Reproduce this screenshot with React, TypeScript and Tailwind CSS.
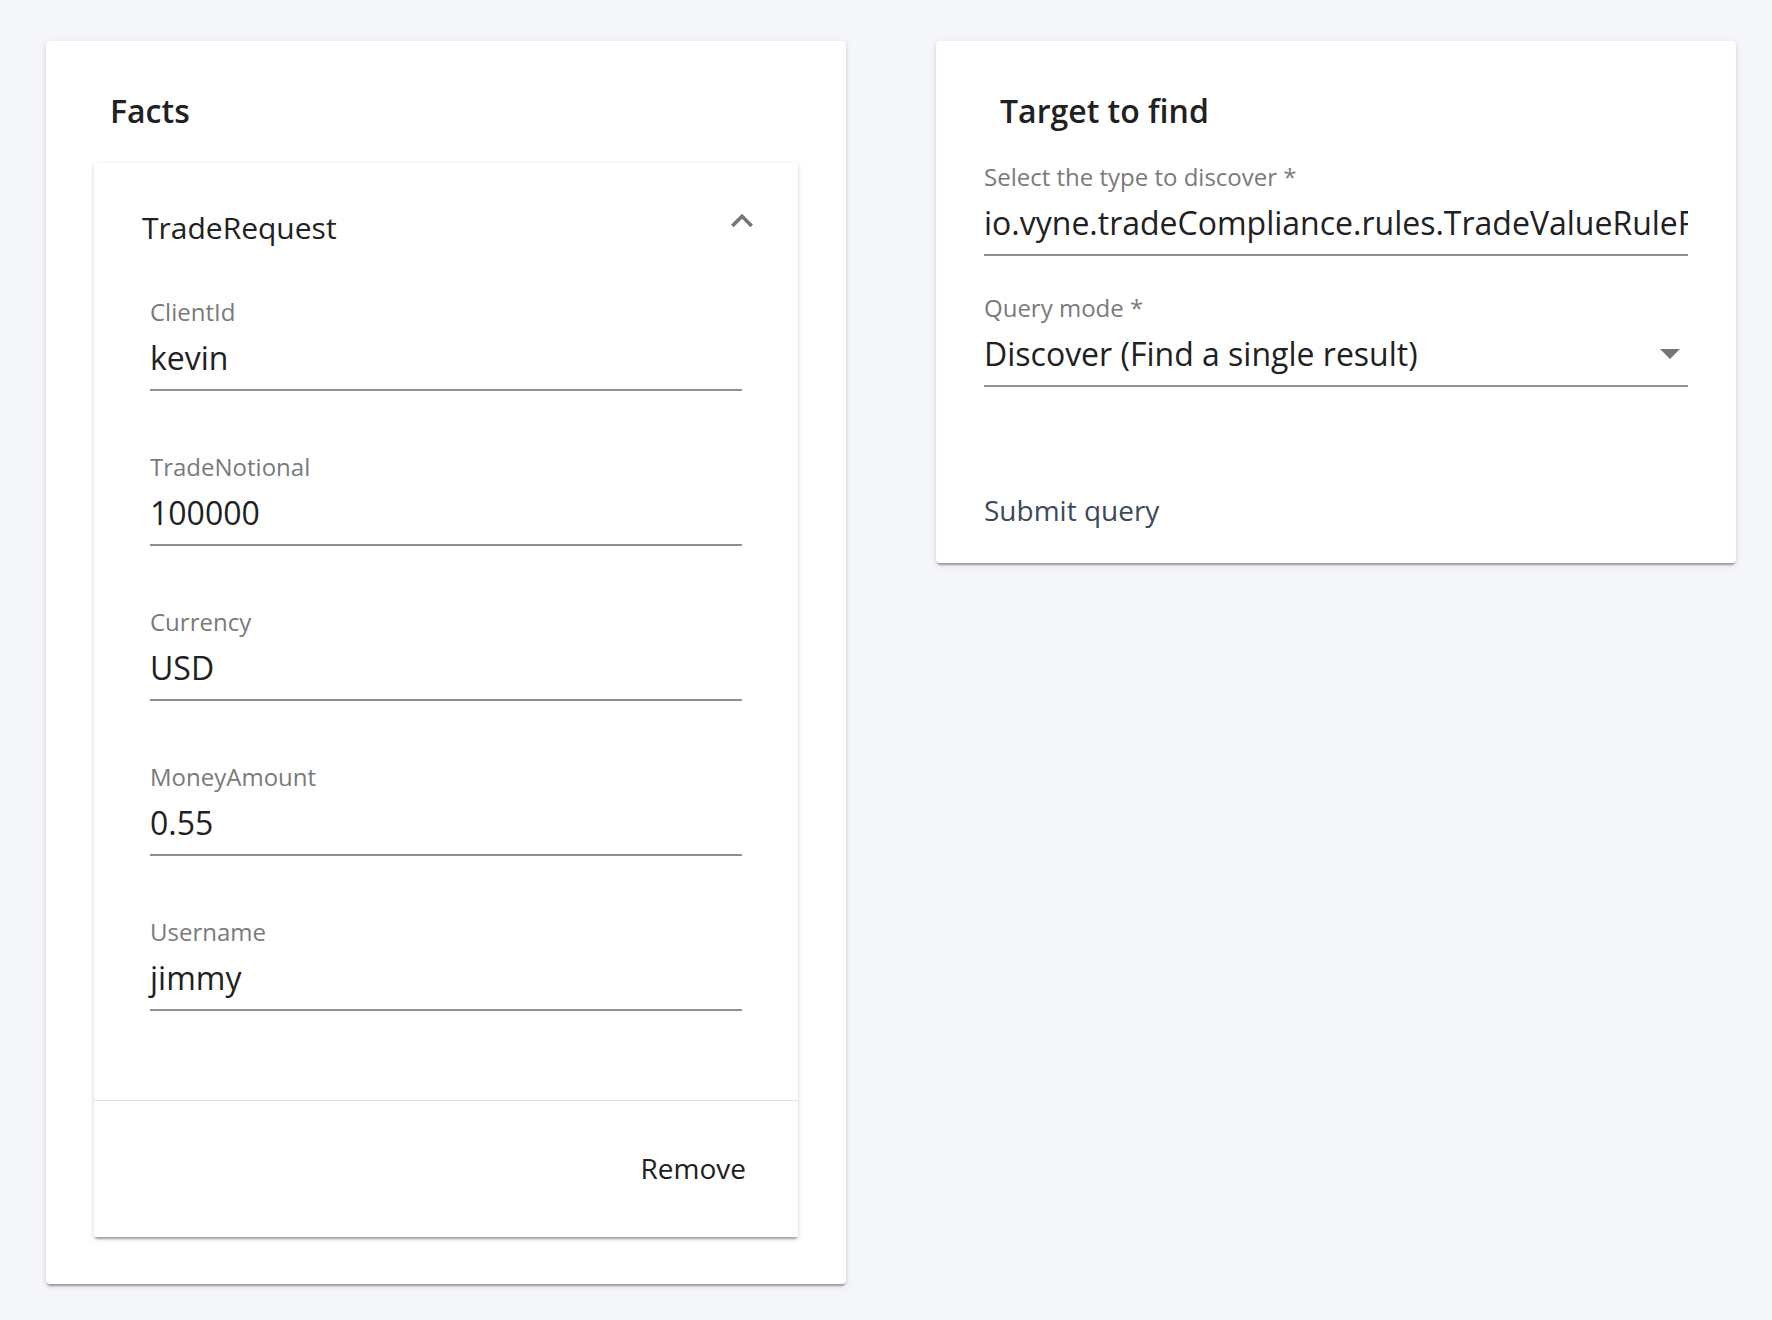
const cardShadow =
  'shadow-[0_4px_2px_-2px_rgba(0,0,0,0.2),0_2px_2px_0_rgba(0,0,0,0.14),0_2px_6px_0_rgba(0,0,0,0.12)]';

const facts = [
  { label: 'ClientId', value: 'kevin' },
  { label: 'TradeNotional', value: '100000' },
  { label: 'Currency', value: 'USD' },
  { label: 'MoneyAmount', value: '0.55' },
  { label: 'Username', value: 'jimmy' },
];

function Field({
  label,
  value,
  arrow,
  clip,
}: {
  label: string;
  value: string;
  arrow?: boolean;
  clip?: boolean;
}) {
  return (
    <div className="flex flex-col">
      <div className="text-[24px] leading-[24px] text-[#7a7a7a] whitespace-nowrap">{label}</div>
      <div className="mt-[14px] flex items-center">
        <div
          className={`flex-1 min-w-0 whitespace-nowrap text-[32px] leading-[40px] text-[#212121] ${
            clip ? 'overflow-hidden' : ''
          }`}
        >
          {value}
        </div>
        {arrow && (
          <svg width="20" height="10" viewBox="0 0 20 10" className="ml-2 mr-[8px] shrink-0">
            <path d="M0 0 L20 0 L10 10 Z" fill="#757575" />
          </svg>
        )}
      </div>
      <div className="mt-[11px] h-[2px] bg-[#8f8f8f]" />
    </div>
  );
}

function FactPanel() {
  return (
    <div className={`mt-[36px] bg-white rounded-[2px] ${cardShadow}`}>
      <div className="flex items-center justify-between pl-[48px] pr-[34px] pt-[50px]">
        <span className="text-[30px] leading-[30px] text-[#212121]">TradeRequest</span>
        <svg width="44" height="44" viewBox="0 0 24 24" className="-mt-[20px] -mb-[6px]">
          <path d="M7.41 15.41 12 10.83l4.59 4.58L18 14l-6-6-6 6z" fill="#757575" />
        </svg>
      </div>
      <div className="flex flex-col gap-[64px] px-[56px] pt-[57px] pb-[89px]">
        {facts.map((f) => (
          <Field key={f.label} label={f.label} value={f.value} />
        ))}
      </div>
      <div className="h-px bg-[#e0e0e0]" />
      <div className="flex justify-end pr-[52px] pt-[53px] pb-[55px]">
        <button className="text-[28px] leading-[28px] text-[#212121]">Remove</button>
      </div>
    </div>
  );
}

export default function App() {
  return (
    <div
      className="min-h-screen bg-[#f5f6fa] pl-[46px] pt-[41px]"
      style={{ fontFamily: '"Open Sans", "Noto Sans", sans-serif' }}
    >
      <div className="flex items-start gap-[90px]">
        {/* Facts */}
        <div className={`w-[800px] bg-white rounded-[4px] px-[48px] pt-[54px] pb-[47px] ${cardShadow}`}>
          <h2 className="ml-[16px] text-[32px] leading-[32px] font-semibold text-[#212121]">Facts</h2>
          <FactPanel />
        </div>

        {/* Target */}
        <div className={`w-[800px] bg-white rounded-[4px] px-[48px] pt-[54px] pb-[39px] ${cardShadow}`}>
          <h2 className="ml-[16px] text-[32px] leading-[32px] font-semibold text-[#212121]">Target to find</h2>
          <div className="mt-[38px] flex flex-col gap-[40px]">
            <Field
              label="Select the type to discover *"
              value="io.vyne.tradeCompliance.rules.TradeValueRuleRequest"
              clip
            />
            <Field label="Query mode *" value="Discover (Find a single result)" arrow />
          </div>
          <button className="mt-[109px] block text-[28px] leading-[28px] text-[#3d4a5a]">
            Submit query
          </button>
        </div>
      </div>
    </div>
  );
}
